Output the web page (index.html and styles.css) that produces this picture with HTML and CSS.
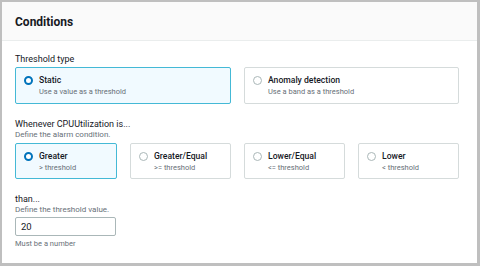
FILE: index.html
```html
<!DOCTYPE html>
<html>
<head>
<meta charset="utf-8">
<link rel="stylesheet" href="styles.css">
</head>
<body>
<div class="frame">
  <div class="header"><h2 class="title">Conditions</h2></div>
  <div class="content">
    <div class="label first">Threshold type</div>
    <div class="row two">
      <div class="card selected">
        <span class="radio on"></span>
        <div class="ctext"><div class="ctitle">Static</div><div class="csub">Use a value as a threshold</div></div>
      </div>
      <div class="card">
        <span class="radio"></span>
        <div class="ctext"><div class="ctitle">Anomaly detection</div><div class="csub">Use a band as a threshold</div></div>
      </div>
    </div>
    <div class="label">Whenever CPUUtilization is...</div>
    <div class="desc">Define the alarm condition.</div>
    <div class="row four">
      <div class="card small selected">
        <span class="radio on"></span>
        <div class="ctext"><div class="ctitle">Greater</div><div class="csub">&gt; threshold</div></div>
      </div>
      <div class="card small">
        <span class="radio"></span>
        <div class="ctext"><div class="ctitle">Greater/Equal</div><div class="csub">&gt;= threshold</div></div>
      </div>
      <div class="card small">
        <span class="radio"></span>
        <div class="ctext"><div class="ctitle">Lower/Equal</div><div class="csub">&lt;= threshold</div></div>
      </div>
      <div class="card small">
        <span class="radio"></span>
        <div class="ctext"><div class="ctitle">Lower</div><div class="csub">&lt; threshold</div></div>
      </div>
    </div>
    <div class="label">than...</div>
    <div class="desc">Define the threshold value.</div>
    <div class="input">20</div>
    <div class="hint">Must be a number</div>
  </div>
</div>
</body>
</html>
```
FILE: styles.css
```css
* { box-sizing: border-box; }
html, body { margin: 0; padding: 0; background: #fff; }
body { font-family: Roboto, "Open Sans", sans-serif; color: #16191f; }
.frame {
  width: 480px; height: 266px;
  border-style: solid; border-color: #bfbfbf;
  border-width: 2px 3px 3px 2px;
  background: #fff;
}
.header {
  height: 39px; background: #fafafa; border-bottom: 1px solid #eaeded;
  display: flex; align-items: center; padding-left: 13px;
}
.title { margin: 0; font-size: 12px; font-weight: 700; line-height: 16px; padding-top: 2px; }
.content { padding: 0 0 0 13px; width: 456px; }
.label { font-size: 9px; line-height: 12px; margin-top: 14px; }
.label.first { margin-top: 12px; }
.desc { font-size: 8px; line-height: 10px; color: #687078; }
.row { display: grid; margin-top: 2px; }
.row.two { grid-template-columns: 216px 215px; column-gap: 13px; }
.row.four { grid-template-columns: 102px 101px 101px 101px; column-gap: 13px; margin-top: 3px; }
.card {
  border: 1px solid #d5dbdb; border-radius: 2px; background: #fff;
  display: flex; align-items: flex-start; gap: 6px;
  height: 37px; padding: 7px 0 0 8px;
}
.card.small { height: 36px; }
.card.selected { border-color: #44b9d6; background: #f1faff; }
.radio {
  width: 9px; height: 9px; border-radius: 50%; border: 1px solid #aab7b8; background: #fff;
  margin-top: 1px; flex: none;
}
.radio.on { border: 2.5px solid #0073bb; }
.ctitle { font-size: 8.6px; line-height: 11px; font-weight: 500; }
.csub { font-size: 7.5px; line-height: 11px; color: #687078; }
.input {
  margin-top: 2px; width: 101px; height: 19px; border: 1px solid #aab7b8; border-radius: 2px;
  font-size: 9.5px; line-height: 17px; padding-left: 5px;
}
.hint { font-size: 7.5px; line-height: 10px; color: #687078; margin-top: 3px; }
```
